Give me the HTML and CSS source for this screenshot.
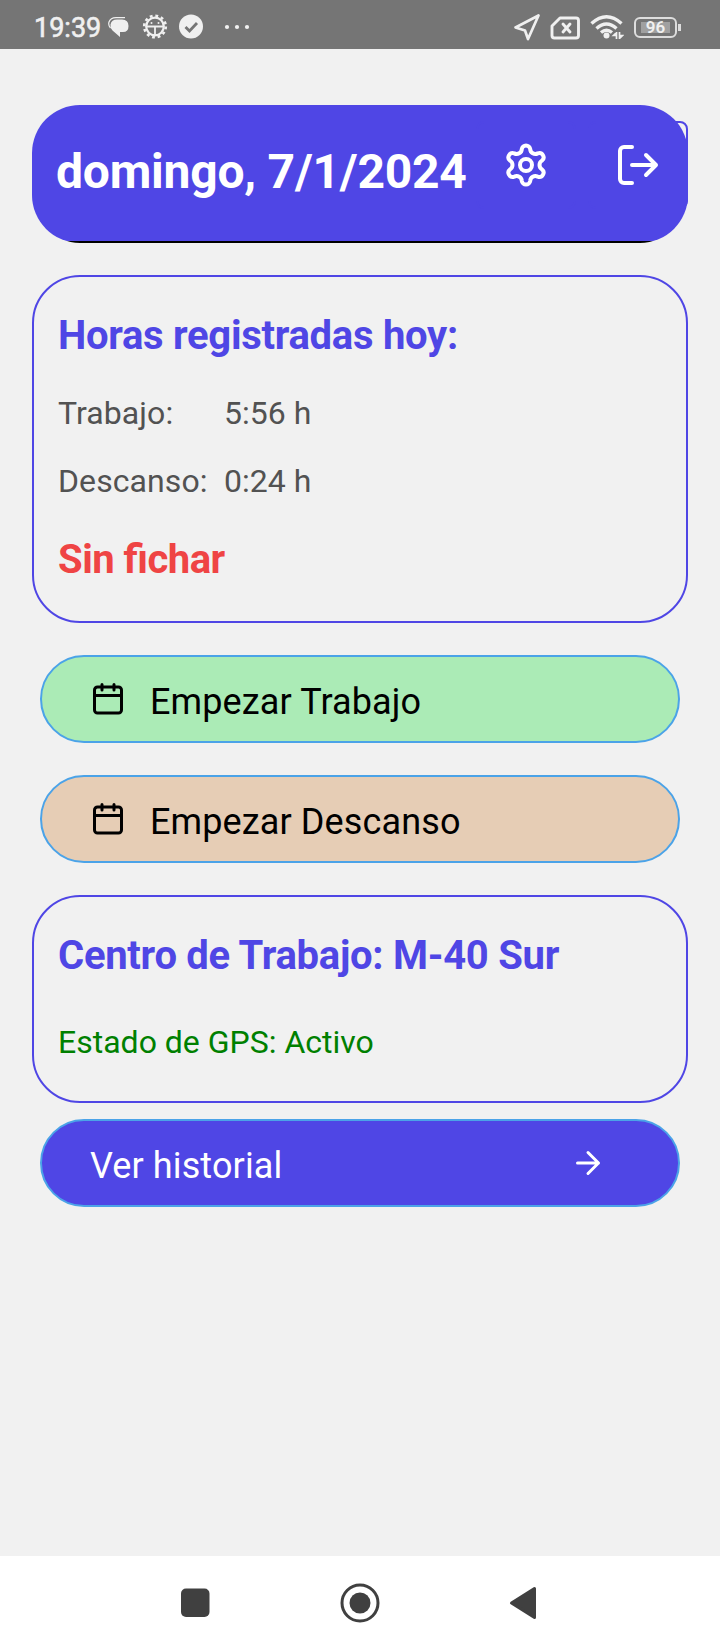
FILE: index.html
```html
<!DOCTYPE html>
<html lang="es">
<head>
    <meta charset="UTF-8">
    <title>Fichajes</title>
    <link rel="stylesheet" href="styles.css">
</head>
<body>
    <div class="status-bar">
        <span class="clock">19:39</span>
        <svg class="status-left" width="150" height="30" viewBox="0 0 150 30">
            <path d="M2.500 15Q0 12 1 9Q2.500 4.700 8 4.700H17" fill="none" stroke="#f0f0f0" stroke-width="1.200"/>
            <path d="M9 6.500H14Q20.500 6.500 20.500 13Q20.500 19 15 19H12V24L4.500 17.500Q2 15 2.500 11.500Q3.500 6.500 9 6.500Z" fill="#f0f0f0"/>
            <circle cx="47" cy="13.500" r="8.800" fill="none" stroke="#f0f0f0" stroke-width="2.200"/>
            <circle cx="47" cy="13.500" r="10.800" fill="none" stroke="#f0f0f0" stroke-width="2.600" stroke-dasharray="2.830 2.830"/>
            <path d="M39 13.500H55M47 13.500V22" stroke="#f0f0f0" stroke-width="1.800"/>
            <circle cx="43.500" cy="10" r="1" fill="#f0f0f0"/>
            <circle cx="50.500" cy="10" r="1" fill="#f0f0f0"/>
            <circle cx="83" cy="13.500" r="12" fill="#f0f0f0"/>
            <path d="M77.500 14L81.500 18L89 10" fill="none" stroke="#757575" stroke-width="2.800"/>
            <circle cx="119" cy="14" r="2.100" fill="#f0f0f0"/>
            <circle cx="129" cy="14" r="2.100" fill="#f0f0f0"/>
            <circle cx="139" cy="14" r="2.100" fill="#f0f0f0"/>
        </svg>
        <div class="status-right">
            <svg width="28" height="30" viewBox="0 0 28 30">
                <path d="M3.500 15.500L26.500 3.500L16 27L13 18.500Z" fill="none" stroke="#f0f0f0" stroke-width="2.700" stroke-linejoin="round"/>
            </svg>
            <svg width="30" height="30" viewBox="0 0 30 30">
                <path d="M10 6H26Q28.500 6 28.500 8.500V23.500Q28.500 26 26 26H4.500Q2 26 2 23.500V14Z" fill="none" stroke="#f0f0f0" stroke-width="2.900" stroke-linejoin="round"/>
                <path d="M13 12L20 20M20 12L13 20" stroke="#f0f0f0" stroke-width="2.900" stroke-linecap="round"/>
            </svg>
            <svg width="34" height="30" viewBox="0 0 34 30">
                <path d="M1.500 11.500Q16.500 -2 31.500 11.500M6.500 16.500Q16.500 7.500 26.500 16.500M11 20.500Q16.500 16 22 20.500" fill="none" stroke="#f0f0f0" stroke-width="3.400"/>
                <circle cx="16.500" cy="23.500" r="3" fill="#f0f0f0"/>
                <path d="M26.500 20V27M29.500 20V27M26.500 20.500L23.500 23.500H26.500M29.500 26.500L32.500 23.500H29.500" fill="none" stroke="#f0f0f0" stroke-width="1.700"/>
            </svg>
            <div class="battery"><span class="battery-level">96</span></div>
        </div>
    </div>

    <div class="content">
        <header class="header">
            <h1 class="date">domingo, 7/1/2024</h1>
            <button class="icon-btn">
                <svg width="48" height="48" viewBox="-24 -24 48 48" fill="none" stroke="#fff" stroke-width="4">
                    <circle r="6"/>
                    <path d="M-4.210 -15.930A4.250 4.250 0 0 1 4.210 -15.930A5.100 5.100 0 0 0 11.690 -11.610A4.250 4.250 0 0 1 15.900 -4.320A5.100 5.100 0 0 0 15.900 4.320A4.250 4.250 0 0 1 11.690 11.610A5.100 5.100 0 0 0 4.210 15.930A4.250 4.250 0 0 1 -4.210 15.930A5.100 5.100 0 0 0 -11.690 11.610A4.250 4.250 0 0 1 -15.900 4.320A5.100 5.100 0 0 0 -15.900 -4.320A4.250 4.250 0 0 1 -11.690 -11.610A5.100 5.100 0 0 0 -4.210 -15.930Z"/>
                </svg>
            </button>
            <button class="icon-btn logout">
                <svg width="48" height="48" viewBox="0 0 24 24" fill="none" stroke="#fff" stroke-width="2" stroke-linecap="round" stroke-linejoin="round">
                    <path d="M9 3H5a2 2 0 0 0-2 2v14a2 2 0 0 0 2 2h4M9 12h12M16 7l5 5-5 5"/>
                </svg>
            </button>
        </header>

        <section class="card hours">
            <h2>Horas registradas hoy:</h2>
            <div class="row"><span class="label">Trabajo:</span><span>5:56 h</span></div>
            <div class="row"><span class="label">Descanso:</span><span>0:24 h</span></div>
            <p class="state">Sin fichar</p>
        </section>

        <button class="action work">
            <svg width="36" height="36" viewBox="0 0 24 24" fill="none" stroke="#000" stroke-width="2" stroke-linecap="round">
                <rect x="3" y="4" width="18" height="17.300" rx="2"/>
                <path d="M8 2.300v3.700M16 2.300v3.700M3 9.700h18"/>
            </svg>
            <span>Empezar Trabajo</span>
        </button>
        <button class="action rest">
            <svg width="36" height="36" viewBox="0 0 24 24" fill="none" stroke="#000" stroke-width="2" stroke-linecap="round">
                <rect x="3" y="4" width="18" height="17.300" rx="2"/>
                <path d="M8 2.300v3.700M16 2.300v3.700M3 9.700h18"/>
            </svg>
            <span>Empezar Descanso</span>
        </button>

        <section class="card center">
            <h2>Centro de Trabajo: M-40 Sur</h2>
            <p class="gps">Estado de GPS: Activo</p>
        </section>

        <button class="action history">
            <span>Ver historial</span>
            <svg width="36" height="36" viewBox="0 0 24 24" fill="none" stroke="#fff" stroke-width="2" stroke-linecap="round" stroke-linejoin="round">
                <path d="M5 12h14M12 5l7 7-7 7"/>
            </svg>
        </button>
    </div>

    <nav class="nav-bar">
        <svg width="40" height="40" viewBox="0 0 40 40" fill="#404040">
            <rect x="6" y="5.500" width="28.500" height="28.500" rx="5"/>
        </svg>
        <svg width="40" height="40" viewBox="0 0 40 40">
            <circle cx="20" cy="20" r="18" fill="none" stroke="#404040" stroke-width="3"/>
            <circle cx="20" cy="20" r="10.500" fill="#404040"/>
        </svg>
        <svg width="40" height="40" viewBox="0 0 40 40">
            <path d="M6.500 20L29.500 5.500V34.500Z" fill="#404040" stroke="#404040" stroke-width="3" stroke-linejoin="round"/>
        </svg>
    </nav>
</body>
</html>
```
FILE: styles.css
```css
* {
    box-sizing: border-box;
}
body {
    margin: 0;
    height: 1650px;
    display: flex;
    flex-direction: column;
    background-color: #f1f1f1;
    font-family: Roboto, "Liberation Sans", sans-serif;
}
h1, h2, p {
    margin: 0;
}
svg {
    display: block;
    flex: none;
}
button {
    font-family: inherit;
    background: none;
}
.status-bar {
    display: flex;
    align-items: center;
    height: 49px;
    padding: 5px 43px 0 34px;
    background-color: #757575;
    color: #f0f0f0;
}
.clock {
    width: 74px;
    padding-top: 2px;
    font-size: 27px;
    line-height: 32px;
    -webkit-text-stroke: 0.6px #f0f0f0;
}
.status-left {
    margin-top: 1px;
}
.status-right {
    display: flex;
    align-items: center;
    gap: 10px;
    margin-left: auto;
}
.battery {
    position: relative;
    width: 43px;
    height: 21px;
    padding: 3px 5px;
    border: 2px solid #ddd;
    border-radius: 6px;
}
.battery::after {
    content: "";
    position: absolute;
    top: 5px;
    right: -6px;
    width: 3px;
    height: 7px;
    background: #ddd;
}
.battery-level {
    display: block;
    background: #a0a0a0;
    font-size: 17px;
    font-weight: 600;
    line-height: 11px;
    text-align: center;
}
.content {
    display: flex;
    flex-direction: column;
    flex: 1;
    padding: 56px 32px 0;
}
.header {
    display: flex;
    align-items: flex-start;
    height: 138px;
    padding: 16px 0 0 24px;
    background: linear-gradient(#000, #000) bottom / 100% 2px no-repeat #4f46e5;
    border-radius: 48px;
}
.date {
    flex: 1;
    margin-top: 23px;
    color: #fff;
    font-size: 48px;
    letter-spacing: -0.22px;
    line-height: 56px;
    white-space: nowrap;
}
.icon-btn {
    height: 88px;
    padding: 18px 24px;
    border: 2px solid #4f46e5;
    border-radius: 8px;
}
.logout {
    margin-left: 12px;
}
.card {
    border: 2px solid #4f46e5;
    border-radius: 48px;
    padding: 31px 24px 0;
}
.card h2 {
    color: #4f46e5;
    font-size: 40px;
    letter-spacing: -0.28px;
    line-height: 56px;
}
.hours {
    height: 348px;
    margin-top: 32px;
}
.row {
    display: flex;
    margin-top: 20px;
    color: #525252;
    font-size: 32px;
    line-height: 48px;
}
.hours h2 {
    margin-bottom: 25px;
}
.label {
    width: 166px;
    letter-spacing: 0.08px;
}
.state {
    margin-top: 27px;
    color: #ef4444;
    font-size: 40px;
    font-weight: bold;
    font-feature-settings: "liga" 1;
    letter-spacing: -0.5px;
    line-height: 56px;
}
.action {
    display: flex;
    align-items: center;
    height: 88px;
    margin: 32px 8px 0;
    padding: 0 48px;
    border: 2px solid #4ba3e8;
    border-radius: 44px;
    color: #000;
    font-size: 36px;
    letter-spacing: 0.12px;
}
.action span {
    margin-top: 6px;
}
.work {
    background-color: #abebb6;
}
.rest {
    background-color: #e6cdb5;
}
.work span, .rest span {
    margin-left: 24px;
}
.center {
    height: 208px;
    margin-top: 32px;
}
.gps {
    margin-top: 34px;
    color: #008000;
    font-size: 32px;
    line-height: 48px;
}
.history {
    justify-content: space-between;
    margin-top: 16px;
    padding-right: 72px;
    background-color: #4f46e5;
    color: #fff;
}
.nav-bar {
    display: flex;
    justify-content: center;
    gap: 125px;
    height: 94px;
    padding-top: 27px;
    background-color: #fff;
}
```
